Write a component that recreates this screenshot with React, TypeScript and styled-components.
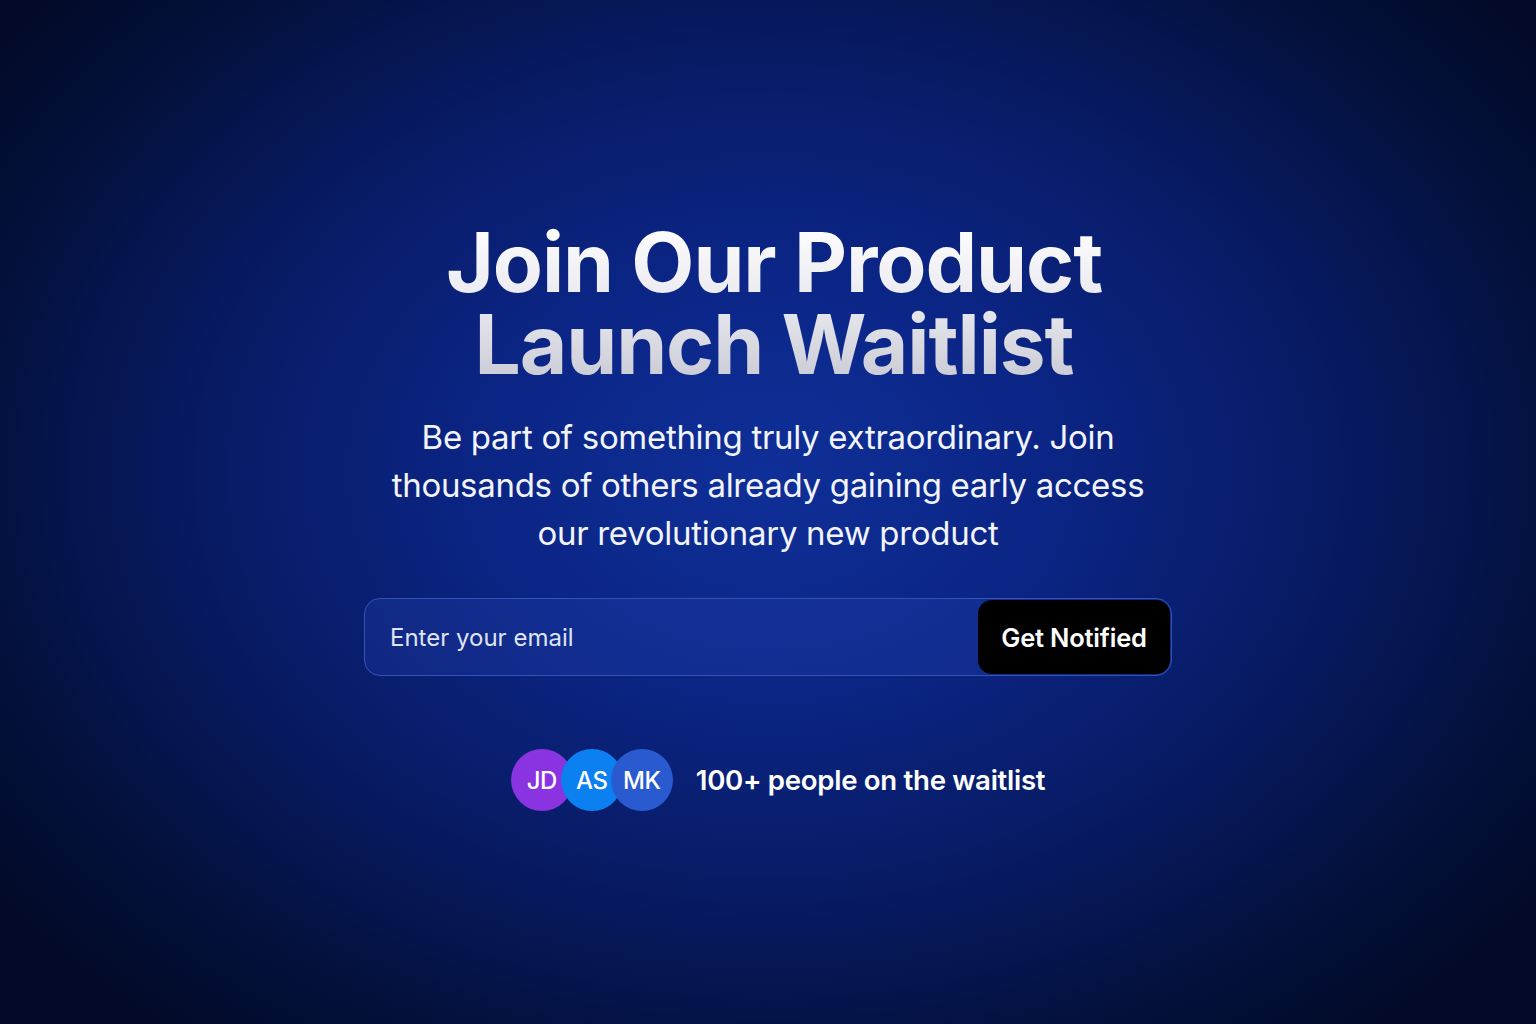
import React from "react";
import styled, { createGlobalStyle } from "styled-components";

const Global = createGlobalStyle`
  html, body { margin: 0; padding: 0; }
  body {
    font-family: "Inter", "Liberation Sans", sans-serif;
    background: #020a2c;
  }
`;

const Page = styled.main`
  width: 1536px;
  height: 1024px;
  box-sizing: border-box;
  background: radial-gradient(ellipse 62% 70% at 50% 46%, #0f2f98 0%, #0b2585 30%, #071a62 60%, #03103a 85%, #020a28 100%);
  display: flex;
  flex-direction: column;
  align-items: center;
  padding-top: 222px;
  overflow: hidden;
`;

const Title = styled.h1`
  margin: 0;
  padding-left: 12px;
  font-family: "Inter", "Liberation Sans", sans-serif;
  font-weight: 700;
  font-size: 82px;
  line-height: 82px;
  letter-spacing: -1.1px;
  text-align: center;
  background: linear-gradient(180deg, #ffffff 0%, #e8e8ef 50%, #c9c9d4 100%);
  -webkit-background-clip: text;
  background-clip: text;
  color: transparent;
`;

const Subtitle = styled.p`
  margin: 27px 0 0;
  width: 780px;
  font-size: 33px;
  line-height: 48px;
  font-weight: 400;
  color: #f2f4fb;
  text-align: center;
  letter-spacing: -0.3px;
`;

const Form = styled.form`
  margin-top: 41px;
  width: 808px;
  height: 78px;
  box-sizing: border-box;
  border: 1.5px solid #3453b8;
  border-radius: 16px;
  background: rgba(40, 70, 180, 0.28);
  display: flex;
  align-items: center;
  padding: 1px;
`;

const EmailInput = styled.input`
  flex: 1;
  height: 100%;
  border: none;
  outline: none;
  background: transparent;
  padding: 0 0 0 24px;
  font-family: "Inter", "Liberation Sans", sans-serif;
  font-size: 24px;
  color: #fff;
  &::placeholder { color: #dfe4f4; }
`;

const Button = styled.button`
  height: 100%;
  width: 192px;
  border: none;
  border-radius: 14px;
  background: #000;
  color: #fff;
  font-family: "Inter", "Liberation Sans", sans-serif;
  font-size: 25.5px;
  font-weight: 600;
  letter-spacing: -0.2px;
  cursor: pointer;
`;

const Social = styled.div`
  margin-top: 73px;
  padding-left: 20px;
  display: flex;
  align-items: center;
  gap: 23px;
`;

const Avatars = styled.div`
  display: flex;
`;

const Avatar = styled.div<{ $bg: string }>`
  width: 62px;
  height: 62px;
  border-radius: 50%;
  background: ${(p) => p.$bg};
  color: #fff;
  display: flex;
  align-items: center;
  justify-content: center;
  font-size: 24px;
  font-weight: 500;
  letter-spacing: -0.5px;
  & + & { margin-left: -12px; }
`;

const Count = styled.span`
  font-size: 27.6px;
  font-weight: 600;
  color: #fff;
  letter-spacing: -0.3px;
`;

export default function App() {
  return (
    <>
      <Global />
      <Page>
        <Title>
          Join Our Product
          <br />
          Launch Waitlist
        </Title>
        <Subtitle>
          Be part of something truly extraordinary. Join thousands of others already gaining early access our revolutionary new product
        </Subtitle>
        <Form onSubmit={(e) => e.preventDefault()}>
          <EmailInput type="email" placeholder="Enter your email" />
          <Button type="submit">Get Notified</Button>
        </Form>
        <Social>
          <Avatars>
            <Avatar $bg="#8a33e0">JD</Avatar>
            <Avatar $bg="#0b80f0">AS</Avatar>
            <Avatar $bg="#2a5ad0">MK</Avatar>
          </Avatars>
          <Count>100+ people on the waitlist</Count>
        </Social>
      </Page>
    </>
  );
}
